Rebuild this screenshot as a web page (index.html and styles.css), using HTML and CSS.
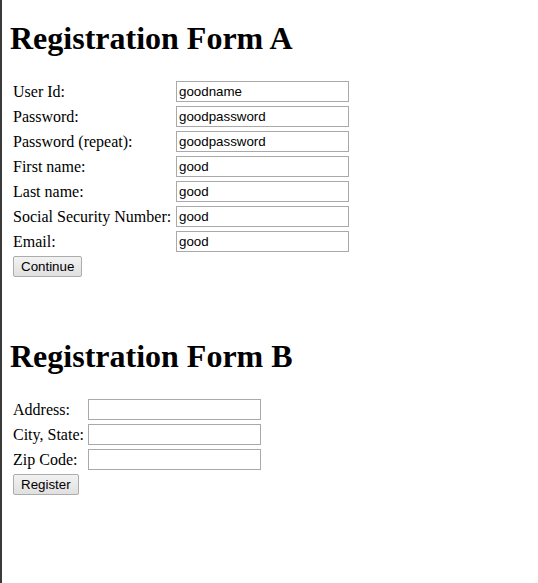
FILE: index.html
```html
<!DOCTYPE html>
<html>
<head>
<meta charset="utf-8">
<title>Registration</title>
<link rel="stylesheet" href="styles.css">
</head>
<body>
<h1 class="title title-first">Registration Form A</h1>
<form class="form form-a">
<table class="grid">
<tr><td class="label">User Id:</td><td><input class="field" type="text" value="goodname"></td></tr>
<tr><td class="label">Password:</td><td><input class="field" type="text" value="goodpassword"></td></tr>
<tr><td class="label">Password (repeat):</td><td><input class="field" type="text" value="goodpassword"></td></tr>
<tr><td class="label">First name:</td><td><input class="field" type="text" value="good"></td></tr>
<tr><td class="label">Last name:</td><td><input class="field" type="text" value="good"></td></tr>
<tr><td class="label">Social Security Number:</td><td><input class="field" type="text" value="good"></td></tr>
<tr><td class="label">Email:</td><td><input class="field" type="text" value="good"></td></tr>
<tr><td colspan="2"><button class="btn" type="button">Continue</button></td></tr>
</table>
</form>
<h1 class="title">Registration Form B</h1>
<form class="form">
<table class="grid">
<tr><td>Address:</td><td><input class="field" type="text"></td></tr>
<tr><td>City, State:</td><td><input class="field" type="text"></td></tr>
<tr><td>Zip Code:</td><td><input class="field" type="text"></td></tr>
<tr><td colspan="2"><button class="btn" type="button">Register</button></td></tr>
</table>
</form>
</body>
</html>
```
FILE: styles.css
```css
html {
  min-height: 100%;
  box-sizing: border-box;
  border-left: 2px solid #3a3a3a;
  background: #fff;
}
body {
  margin: 8px;
  font-family: "Liberation Serif", "Times New Roman", serif;
  font-size: 16px;
  color: #000;
}
.title {
  font-size: 32px;
  font-weight: bold;
  margin: 21px 0;
}
.title-first {
  margin-top: 12px;
}
.form {
  margin: 0;
}
.form-a {
  margin-bottom: 58px;
}
.grid {
  border-spacing: 2px;
  border-collapse: separate;
}
.grid td {
  padding: 1px;
  vertical-align: middle;
}
.form-a .label {
  min-width: 159px;
}
.field {
  display: block;
  box-sizing: border-box;
  width: 173px;
  height: 21px;
  padding: 1px 2px;
  border: 1px solid #a9a9a9;
  font-family: "Liberation Sans", Arial, sans-serif;
  font-size: 13.33px;
  color: #000;
  background: #fff;
  outline: none;
}
.btn {
  display: block;
  box-sizing: border-box;
  height: 21px;
  padding: 1px 7px;
  border: 1px solid #acacac;
  border-radius: 2px;
  background: linear-gradient(#f2f2f2, #e0e0e0);
  font-family: "Liberation Sans", Arial, sans-serif;
  font-size: 13.33px;
  color: #000;
}
```
